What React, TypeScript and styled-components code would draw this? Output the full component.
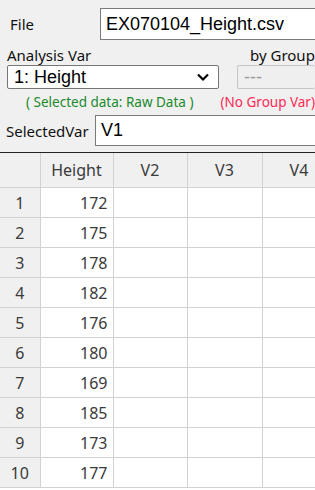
import styled, { createGlobalStyle } from "styled-components";

const GlobalStyle = createGlobalStyle`
  html, body {
    margin: 0;
    padding: 0;
    background: #ffffff;
    overflow: hidden;
  }
  body {
    font-family: "Noto Sans", "Open Sans", sans-serif;
  }
`;

const Page = styled.div`
  width: 315px;
  height: 490px;
  overflow: hidden;
`;

const Panel = styled.div`
  background: #f0f0f0;
  height: 153px;
  box-sizing: border-box;
  padding-top: 8px;
  border-bottom: 1px solid #222;
  white-space: nowrap;
`;

const Row = styled.div<{ $pl?: number }>`
  display: flex;
  align-items: center;
  padding-left: ${(p) => p.$pl ?? 0}px;
`;

const Label = styled.span<{ $w?: number }>`
  font-size: 15px;
  color: #111;
  width: ${(p) => (p.$w ? `${p.$w}px` : "auto")};
  flex-shrink: 0;
`;

const TextBox = styled.div<{ $h: number }>`
  flex: 1;
  height: ${(p) => p.$h}px;
  box-sizing: border-box;
  background: #fff;
  border: 1px solid #7a7a7a;
  border-right: none;
  font-family: "Liberation Sans", Arial, sans-serif;
  font-size: 18px;
  color: #000;
  padding-left: 5px;
  display: flex;
  align-items: center;
`;

const LabelRow = styled.div`
  display: flex;
  height: 21px;
  align-items: flex-end;
  margin-top: 4px;
`;

const SelectRow = styled.div`
  display: flex;
`;

const Select = styled.div<{ $disabled?: boolean }>`
  height: 24px;
  box-sizing: border-box;
  background: ${(p) => (p.$disabled ? "#efefef" : "#fff")};
  border: 1px solid ${(p) => (p.$disabled ? "#c6c6c6" : "#767676")};
  border-radius: 2px;
  font-family: "Liberation Sans", Arial, sans-serif;
  font-size: 18px;
  color: ${(p) => (p.$disabled ? "#9a9a9a" : "#000")};
  display: flex;
  align-items: center;
  justify-content: space-between;
  padding: 0 8px 0 6px;
`;

const Note = styled.span<{ $color: string }>`
  font-size: 13.5px;
  color: ${(p) => p.$color};
`;

const NoteRow = styled.div`
  display: flex;
  height: 26px;
  align-items: center;
`;

const Table = styled.table`
  width: 336px;
  border-collapse: collapse;
  table-layout: fixed;
  font-family: "Noto Sans", "Open Sans", sans-serif;
  font-size: 16px;
  color: #3a3a3a;
`;

const HeadCell = styled.th`
  height: 34px;
  padding: 0;
  background: #f0f0f0;
  border: 1px solid #d2d2d2;
  border-top: none;
  font-weight: normal;
  text-align: center;
`;

const RowHead = styled.td`
  height: 29px;
  padding: 0;
  background: #f0f0f0;
  border: 1px solid #d2d2d2;
  text-align: center;
`;

const Cell = styled.td`
  height: 29px;
  padding: 0 5px 0 0;
  background: #fff;
  border: 1px solid #d2d2d2;
  text-align: right;
`;

const Chevron = () => (
  <svg width="14" height="14" viewBox="0 0 14 14">
    <path d="M2 4.5 L7 9.5 L12 4.5" fill="none" stroke="#000" strokeWidth="2.2" />
  </svg>
);

const heights = [172, 175, 178, 182, 176, 180, 169, 185, 173, 177];
const columns = [
  { name: "Height", w: 73 },
  { name: "V2", w: 74 },
  { name: "V3", w: 75 },
  { name: "V4", w: 74 },
];

export default function App() {
  return (
    <Page>
      <GlobalStyle />
      <Panel>
        <Row $pl={10}>
          <Label $w={90}>File</Label>
          <TextBox $h={32}>EX070104_Height.csv</TextBox>
        </Row>
        <LabelRow>
          <Label $w={243} style={{ paddingLeft: 7 }}>Analysis Var</Label>
          <Label>by Group</Label>
        </LabelRow>
        <SelectRow>
          <Select style={{ marginLeft: 7, width: 212 }}>
            <span>1: Height</span>
            <Chevron />
          </Select>
          <Select $disabled style={{ marginLeft: 18, flex: 1, borderRight: "none" }}>
            <span>---</span>
          </Select>
        </SelectRow>
        <NoteRow>
          <Note $color="#1a8a2a" style={{ paddingLeft: 26, width: 218 }}>
            ( Selected data: Raw Data )
          </Note>
          <Note $color="#ff2a55">(No Group Var)</Note>
        </NoteRow>
        <Row $pl={6}>
          <Label $w={89}>SelectedVar</Label>
          <TextBox $h={31}>V1</TextBox>
        </Row>
      </Panel>
      <Table>
        <colgroup>
          <col style={{ width: 40 }} />
          {columns.map((c) => (
            <col key={c.name} style={{ width: c.w }} />
          ))}
        </colgroup>
        <thead>
          <tr>
            <HeadCell style={{ borderLeft: "none" }} />
            {columns.map((c) => (
              <HeadCell key={c.name}>{c.name}</HeadCell>
            ))}
          </tr>
        </thead>
        <tbody>
          {heights.map((h, i) => (
            <tr key={i}>
              <RowHead style={{ borderLeft: "none" }}>{i + 1}</RowHead>
              <Cell>{h}</Cell>
              <Cell />
              <Cell />
              <Cell />
            </tr>
          ))}
        </tbody>
      </Table>
    </Page>
  );
}
